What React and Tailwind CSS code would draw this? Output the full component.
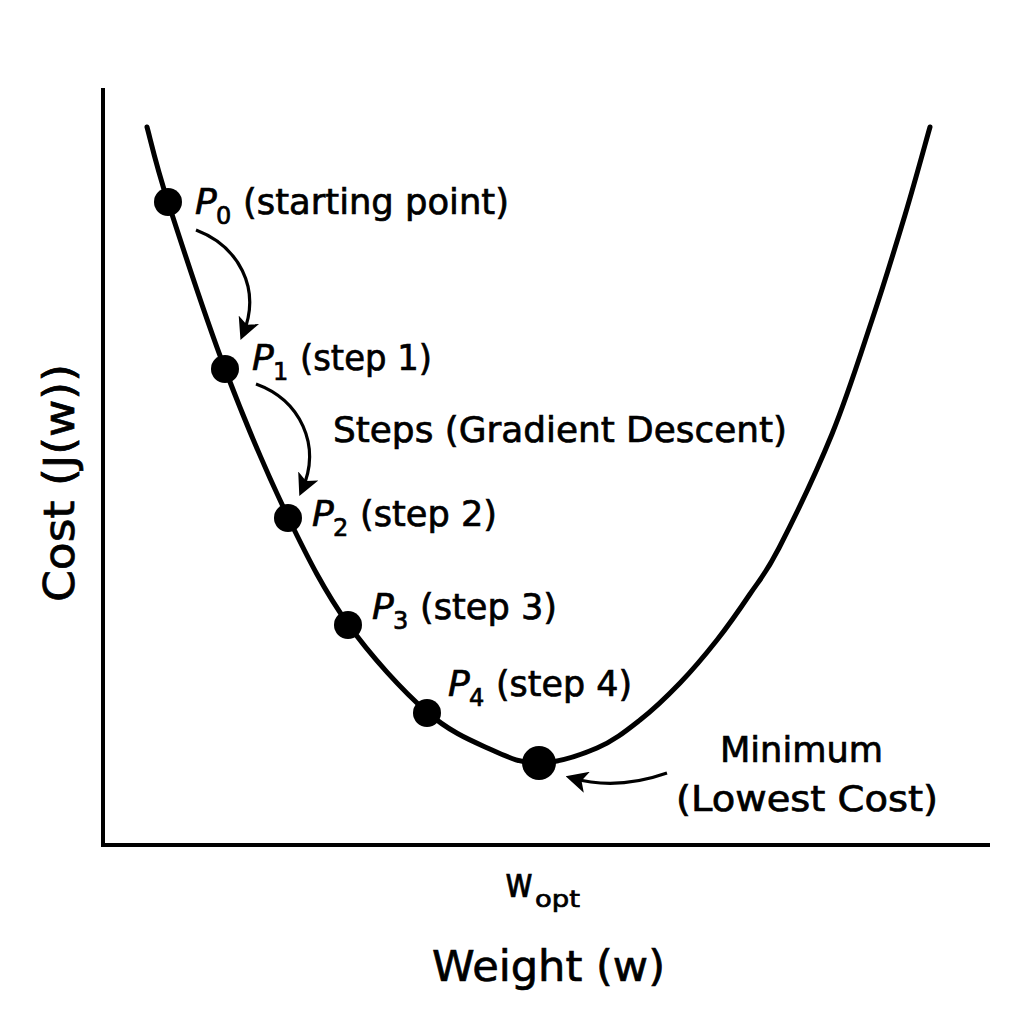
import React from "react";

const font = '"DejaVu Sans", "Noto Sans", sans-serif';

function catmull(points) {
  let d = `M${points[0][0]},${points[0][1]}`;
  for (let i = 0; i < points.length - 1; i++) {
    const p0 = points[i - 1] || points[i];
    const p1 = points[i];
    const p2 = points[i + 1];
    const p3 = points[i + 2] || p2;
    const c1x = p1[0] + (p2[0] - p0[0]) / 6;
    const c1y = p1[1] + (p2[1] - p0[1]) / 6;
    const c2x = p2[0] - (p3[0] - p1[0]) / 6;
    const c2y = p2[1] - (p3[1] - p1[1]) / 6;
    d += ` C${c1x.toFixed(1)},${c1y.toFixed(1)} ${c2x.toFixed(1)},${c2y.toFixed(1)} ${p2[0]},${p2[1]}`;
  }
  return d;
}

const curvePts = [
  [147, 127],
  [168, 202],
  [225, 369],
  [288, 517],
  [348, 624],
  [427, 712],
  [492, 750],
  [539, 763],
  [597, 748],
  [640, 720],
  [680, 683],
  [717, 640],
  [750, 594],
  [779, 548],
  [832, 434],
  [872, 320],
  [905, 215],
  [930, 127],
];

const T = { fontFamily: font, fill: "#000", stroke: "#000", strokeWidth: 0.7 };

function PLabel({ x, y, sub, text, len }) {
  return (
    <g {...T}>
      <text x={x} y={y} fontSize="36" fontStyle="italic">P</text>
      <text x={x + 21} y={y + 10} fontSize="24">{sub}</text>
      <text x={x + 48} y={y} fontSize="35" textLength={len} lengthAdjust="spacingAndGlyphs">{text}</text>
    </g>
  );
}

export default function App() {
  return (
    <div className="w-[1024px] h-[1024px] bg-white">
      <svg width="1024" height="1024" viewBox="0 0 1024 1024" className="block">
        <defs>
          <marker
            id="ah"
            viewBox="0 0 10 10"
            refX="7"
            refY="5"
            markerWidth="22"
            markerHeight="22"
            markerUnits="userSpaceOnUse"
            orient="auto"
          >
            <path d="M0,0 L10,5 L0,10 L2.5,5 Z" fill="#000" />
          </marker>
        </defs>

        {/* axes */}
        <line x1="103" y1="88" x2="103" y2="847" stroke="#000" strokeWidth="4" />
        <line x1="101" y1="845" x2="990" y2="845" stroke="#000" strokeWidth="4" />

        {/* cost curve */}
        <path d={catmull(curvePts)} fill="none" stroke="#000" strokeWidth="5" strokeLinecap="round" strokeLinejoin="round" />

        {/* points */}
        <circle cx="168" cy="202" r="14" fill="#000" />
        <circle cx="225" cy="369" r="14" fill="#000" />
        <circle cx="288" cy="518" r="14" fill="#000" />
        <circle cx="348" cy="625" r="14" fill="#000" />
        <circle cx="427" cy="713" r="14" fill="#000" />
        <circle cx="539" cy="763" r="17" fill="#000" />

        {/* arrows */}
        <path d="M196,230 C238,246 262,288 243,334" fill="none" stroke="#000" strokeWidth="3.2" markerEnd="url(#ah)" />
        <path d="M256,384 C300,400 322,445 302,490" fill="none" stroke="#000" strokeWidth="3.2" markerEnd="url(#ah)" />
        <path d="M667,773 C630,786 600,786 572,778" fill="none" stroke="#000" strokeWidth="3.2" markerEnd="url(#ah)" />

        {/* labels */}
        <PLabel x={195} y={214} sub="0" text="(starting point)" len={266} />
        <PLabel x={252} y={370} sub="1" text="(step 1)" len={132} />
        <text x="333" y="442" {...T} fontSize="35" textLength="454" lengthAdjust="spacingAndGlyphs">
          Steps (Gradient Descent)
        </text>
        <PLabel x={312} y={526} sub="2" text="(step 2)" len={137} />
        <PLabel x={372} y={619} sub="3" text="(step 3)" len={137} />
        <PLabel x={448} y={696} sub="4" text="(step 4)" len={136} />

        <text x="720" y="762" {...T} fontSize="35" textLength="163" lengthAdjust="spacingAndGlyphs">
          Minimum
        </text>
        <text x="676" y="811" {...T} fontSize="35" textLength="262" lengthAdjust="spacingAndGlyphs">
          (Lowest Cost)
        </text>

        <text x="505" y="897" {...T} fontSize="42" textLength="28" lengthAdjust="spacingAndGlyphs">w</text>
        <text x="535" y="907" {...T} fontSize="23" textLength="45" lengthAdjust="spacingAndGlyphs">opt</text>

        <text x="432" y="981" {...T} fontSize="43" textLength="233" lengthAdjust="spacingAndGlyphs">
          Weight (w)
        </text>

        <text
          x="0"
          y="0"
          {...T}
          fontSize="42"
          textLength="238"
          lengthAdjust="spacingAndGlyphs"
          transform="translate(74,602) rotate(-90)"
        >
          Cost (J(w))
        </text>
      </svg>
    </div>
  );
}
